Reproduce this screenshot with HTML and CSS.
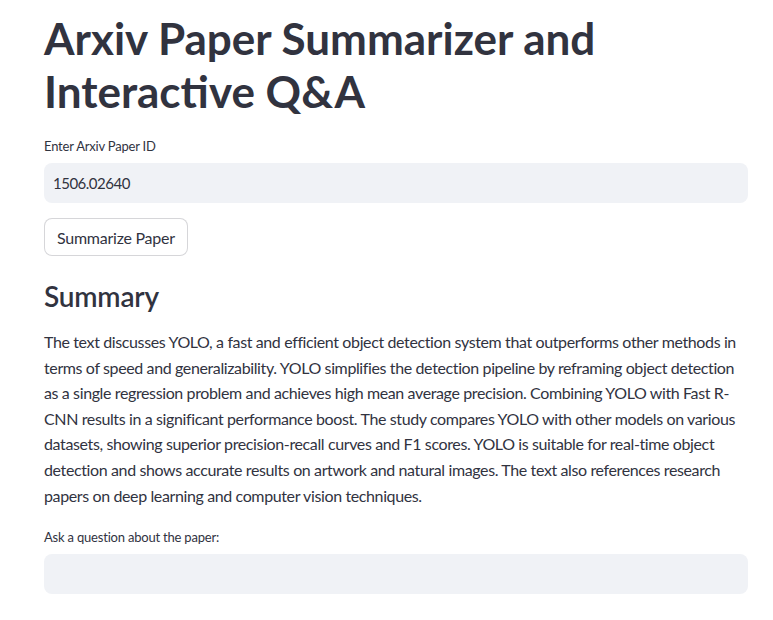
FILE: index.html
```html
<!DOCTYPE html>
<html>
<head>
<meta charset="utf-8">
<link rel="stylesheet" href="styles.css">
</head>
<body>
<main class="main">
  <h1 class="title">Arxiv Paper Summarizer and Interactive Q&amp;A</h1>
  <div class="field">
    <label class="label">Enter Arxiv Paper ID</label>
    <div class="input">1506.02640</div>
  </div>
  <button class="btn">Summarize Paper</button>
  <h2 class="heading">Summary</h2>
  <p class="para">The text discusses YOLO, a fast and efficient object detection system that outperforms other methods in terms of speed and generalizability. YOLO simplifies the detection pipeline by reframing object detection as a single regression problem and achieves high mean average precision. Combining YOLO with Fast R-CNN results in a significant performance boost. The study compares YOLO with other models on various datasets, showing superior precision-recall curves and F1 scores. YOLO is suitable for real-time object detection and shows accurate results on artwork and natural images. The text also references research papers on deep learning and computer vision techniques.</p>
  <div class="field">
    <label class="label">Ask a question about the paper:</label>
    <div class="input"></div>
  </div>
</main>
</body>
</html>
```
FILE: styles.css
```css
html, body {
  margin: 0;
  padding: 0;
  background: #ffffff;
}
body {
  font-family: Lato, "Noto Sans", sans-serif;
  color: rgb(49, 51, 63);
}
.main {
  width: 704px;
  padding: 12px 0 0 44px;
  display: flex;
  flex-direction: column;
  align-items: flex-start;
}
.title {
  margin: 0;
  font-size: 44px;
  line-height: 53px;
  font-weight: 700;
  letter-spacing: 0;
}
.field {
  width: 100%;
  display: flex;
  flex-direction: column;
}
.title + .field {
  margin-top: 17px;
}
.label {
  font-size: 13px;
  line-height: 22px;
  height: 22px;
  margin-bottom: 6px;
  letter-spacing: -0.2px;
}
.input {
  height: 40px;
  background: rgb(240, 242, 246);
  border-radius: 8px;
  font-size: 15px;
  line-height: 40px;
  padding-left: 9px;
  letter-spacing: -0.5px;
}
.btn {
  margin-top: 15px;
  height: 38px;
  padding: 0 12px;
  background: #fff;
  border: 1px solid rgba(49, 51, 63, 0.2);
  border-radius: 8px;
  font-family: inherit;
  font-size: 16px;
  color: rgb(49, 51, 63);
  letter-spacing: -0.25px;
}
.heading {
  margin: 21px 0 0;
  font-size: 28px;
  line-height: 38px;
  font-weight: 600;
  letter-spacing: -0.2px;
}
.para {
  margin: 14px 0 0;
  font-size: 16px;
  line-height: 25.6px;
  letter-spacing: -0.38px;
}
.para + .field {
  margin-top: 18px;
}
```
